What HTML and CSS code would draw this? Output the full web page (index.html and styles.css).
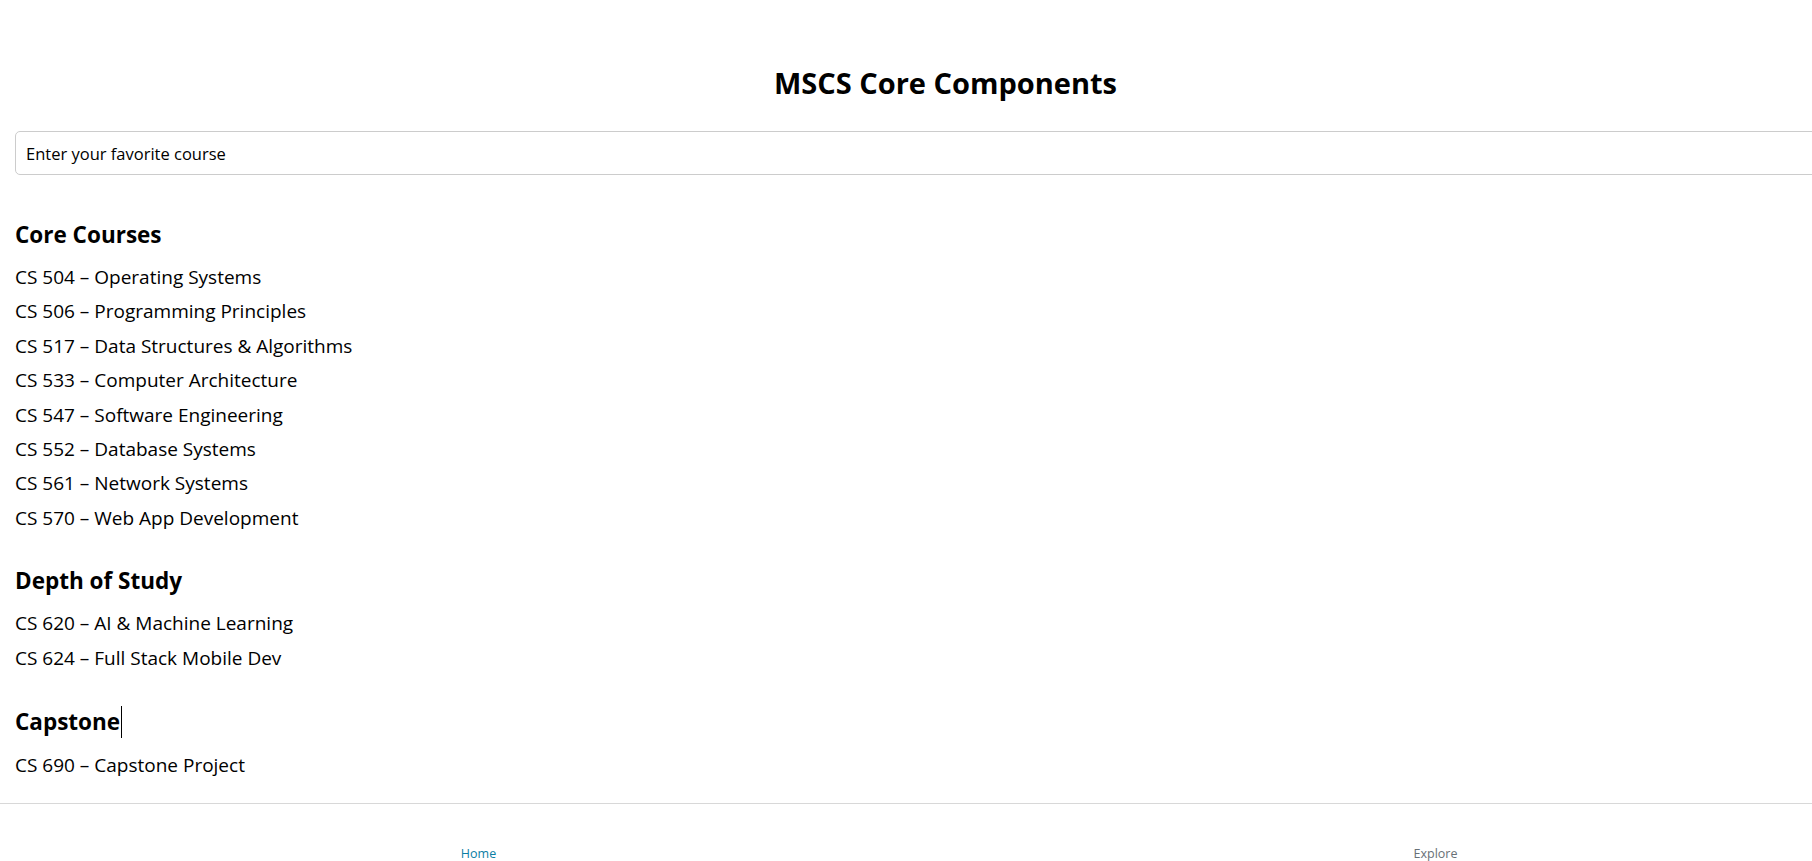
FILE: index.html
```html
<!DOCTYPE html>
<html lang="en">
<head>
<meta charset="utf-8">
<title>MSCS Core Components</title>
<link rel="stylesheet" href="styles.css">
</head>
<body>
<div class="app">
  <main class="content">
    <h1 class="title">MSCS Core Components</h1>
    <input class="course-input" type="text" placeholder="Enter your favorite course">

    <section class="group">
      <h2 class="group-title">Core Courses</h2>
      <ul class="course-list">
        <li>CS 504 – Operating Systems</li>
        <li>CS 506 – Programming Principles</li>
        <li>CS 517 – Data Structures &amp; Algorithms</li>
        <li>CS 533 – Computer Architecture</li>
        <li>CS 547 – Software Engineering</li>
        <li>CS 552 – Database Systems</li>
        <li>CS 561 – Network Systems</li>
        <li>CS 570 – Web App Development</li>
      </ul>
    </section>

    <section class="group">
      <h2 class="group-title">Depth of Study</h2>
      <ul class="course-list">
        <li>CS 620 – AI &amp; Machine Learning</li>
        <li>CS 624 – Full Stack Mobile Dev</li>
      </ul>
    </section>

    <section class="group">
      <h2 class="group-title">Capstone<span class="caret"></span></h2>
      <ul class="course-list">
        <li>CS 690 – Capstone Project</li>
      </ul>
    </section>
  </main>

  <nav class="tabbar">
    <a class="tab tab-home active">Home</a>
    <a class="tab tab-explore">Explore</a>
  </nav>
</div>
</body>
</html>
```

FILE: styles.css
```css
html, body {
  margin: 0;
  padding: 0;
  overflow: hidden;
  background: #ffffff;
}

body {
  font-family: "Open Sans", "Noto Sans", sans-serif;
  color: #000000;
}

.app {
  width: 1914px;
  display: flex;
  flex-direction: column;
}

.content {
  padding: 63px 38px 20.5px 15px;
  display: flex;
  flex-direction: column;
}

.title {
  margin: 0;
  font-size: 29px;
  line-height: 40px;
  font-weight: 700;
  text-align: center;
}

.course-input {
  margin-top: 28px;
  height: 44px;
  box-sizing: border-box;
  border: 1px solid #cccccc;
  border-radius: 5px;
  padding: 0 10px;
  font-family: inherit;
  font-size: 16.5px;
  color: #000000;
  outline: none;
}

.course-input::placeholder {
  color: #000000;
  opacity: 1;
}

.group {
  margin-top: 45px;
}

.group + .group {
  margin-top: 31px;
}

.group-title {
  margin: 0 0 10px 0;
  font-size: 22.5px;
  line-height: 30px;
  font-weight: 700;
  display: flex;
  align-items: center;
}

.caret {
  display: inline-block;
  width: 1px;
  height: 32px;
  background: #000000;
  margin-left: 1px;
}

.course-list {
  list-style: none;
  margin: 0;
  padding: 0;
}

.course-list li {
  font-size: 19px;
  line-height: 34.4px;
}

.tabbar {
  display: flex;
  border-top: 1px solid #d8d8d8;
  height: 80px;
}

.tab {
  flex: 1;
  display: flex;
  justify-content: center;
  padding-top: 42px;
  font-size: 12.5px;
  line-height: 16px;
  font-weight: 500;
  color: #687076;
  text-decoration: none;
}

.tab.active {
  color: #0a7ea4;
}
```
